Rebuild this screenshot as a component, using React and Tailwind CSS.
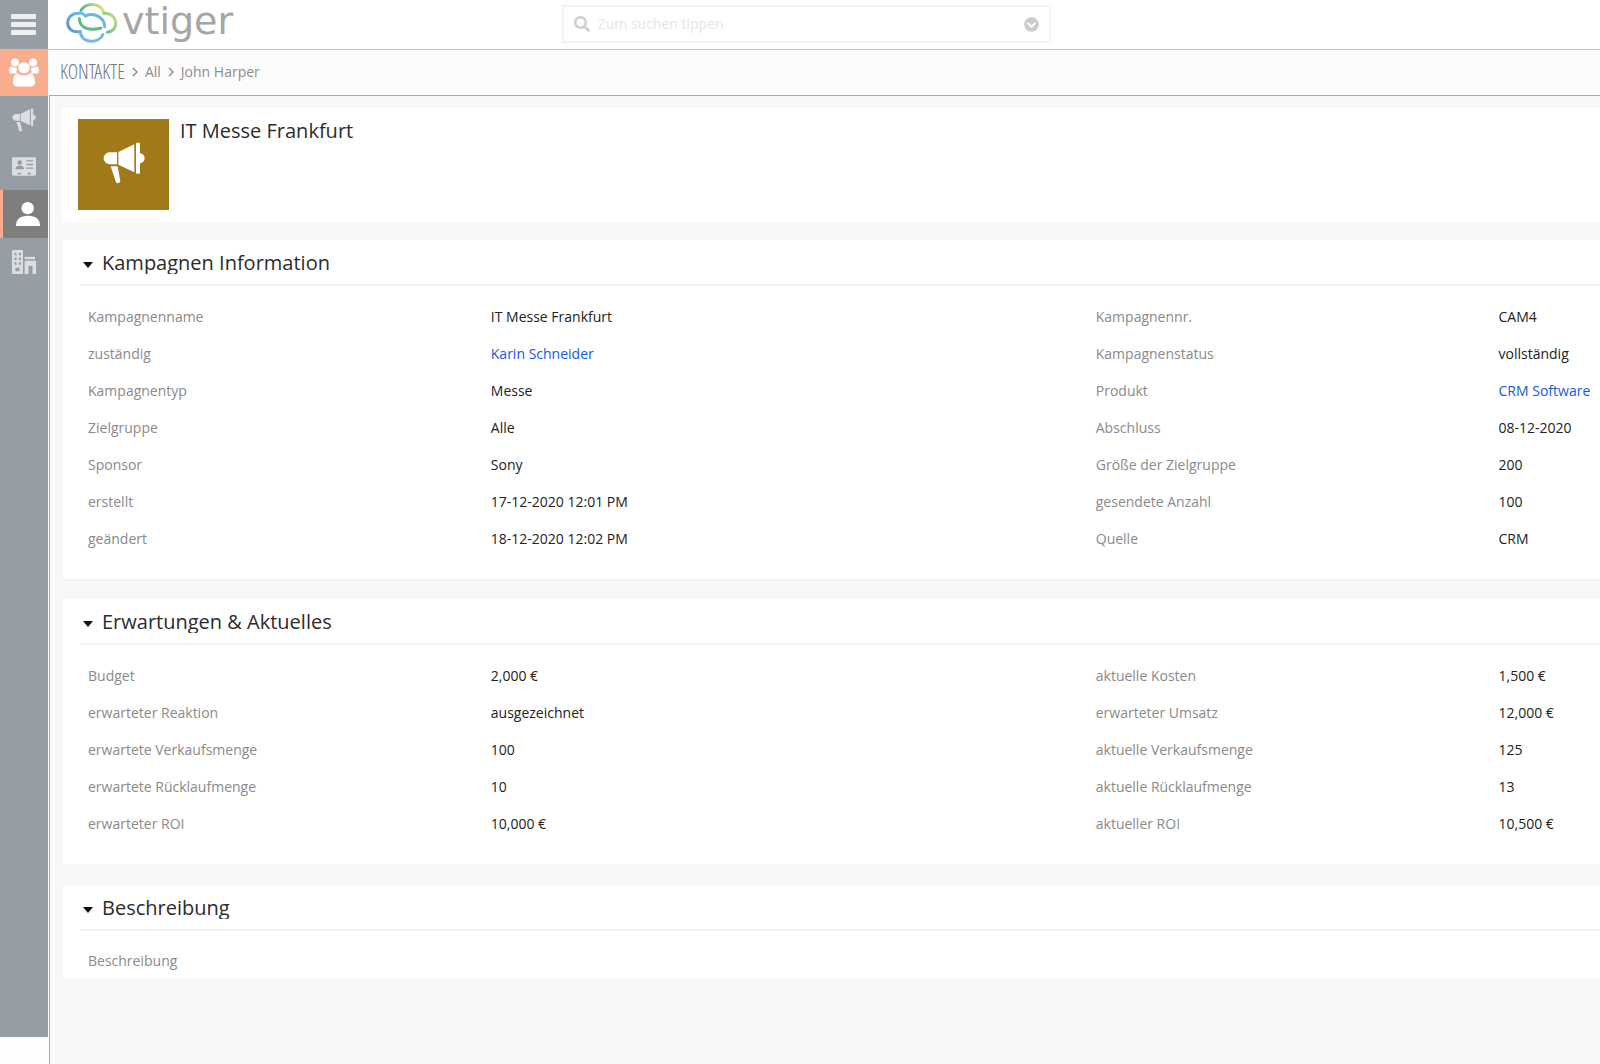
import { useState } from 'react'
import { FaChevronCircleDown, FaSearch } from 'react-icons/fa'

const infoRows = [
  ['Kampagnenname', 'IT Messe Frankfurt', 'Kampagnennr.', 'CAM4'],
  ['zuständig', { link: 'Karin Schneider' }, 'Kampagnenstatus', 'vollständig'],
  ['Kampagnentyp', 'Messe', 'Produkt', { link: 'CRM Software' }],
  ['Zielgruppe', 'Alle', 'Abschluss', '08-12-2020'],
  ['Sponsor', 'Sony', 'Größe der Zielgruppe', '200'],
  ['erstellt', '17-12-2020 12:01 PM', 'gesendete Anzahl', '100'],
  ['geändert', '18-12-2020 12:02 PM', 'Quelle', 'CRM'],
]

const expectationRows = [
  ['Budget', '2,000 €', 'aktuelle Kosten', '1,500 €'],
  ['erwarteter Reaktion', 'ausgezeichnet', 'erwarteter Umsatz', '12,000 €'],
  ['erwartete Verkaufsmenge', '100', 'aktuelle Verkaufsmenge', '125'],
  ['erwartete Rücklaufmenge', '10', 'aktuelle Rücklaufmenge', '13'],
  ['erwarteter ROI', '10,000 €', 'aktueller ROI', '10,500 €'],
]

function MenuIcon() {
  return (
    <svg viewBox="0 0 26 22" className="w-[26px] h-[22px]" fill="currentColor">
      <rect x="0" y="0" width="25" height="5" rx="1" />
      <rect x="0" y="8" width="25" height="5" rx="1" />
      <rect x="0" y="16" width="25" height="5" rx="1" />
    </svg>
  )
}

function GroupIcon() {
  return (
    <svg viewBox="0 0 90 86" className="w-[30px] h-[29px]" fill="currentColor">
      <circle cx="18" cy="13" r="12" />
      <circle cx="72" cy="13" r="12" />
      <path d="M8 25c-6 0-8 8-8 14 0 5 3 7 8 7h16c-2-6-2-12 1-17-4 0-13-1-17-4z" />
      <path d="M82 25c6 0 8 8 8 14 0 5-3 7-8 7H66c2-6 2-12-1-17 4 0 13-1 17-4z" />
      <circle cx="45" cy="29" r="17" />
      <path d="M28 46c-12 0-16 11-16 26 0 9 5 13 13 13h40c8 0 13-4 13-13 0-15-4-26-16-26-9 8-25 8-34 0z" />
    </svg>
  )
}

function MegaphoneIcon({ className }) {
  return (
    <svg viewBox="308 156 126 126" className={className} fill="currentColor">
      <path d="M350 187h-20c-12 0-20 8-20 18s8 18 20 18h20z" />
      <path d="M354 186l48-23v84l-48-23z" />
      <path d="M407 160q0-2 3-2h6q3 0 3 3v29c8 1 14 7 14 15s-6 14-14 15v28q0 3-3 3h-6q-3 0-3-3z" />
      <path d="M331 229h21l8 45q0 3-3 4l-6 2q-3 0-4-3z" />
    </svg>
  )
}

function ContactCardIcon() {
  return (
    <svg viewBox="0 0 72 56" className="w-6 h-[19px]" fill="currentColor">
      <path
        fillRule="evenodd"
        d="M4 0h64q4 0 4 4v48q0 4-4 4H4q-4 0-4-4V4q0-4 4-4zM23 9a7 7 0 1 0 0 14 7 7 0 0 0 0-14zM10 36h26c0-7-5-11-13-11s-13 4-13 11zM43 9v4h20V9zM43 20v4h20v-4zM43 31v4h20v-4zM17 47v5h9v-5zM47 47v5h9v-5z"
      />
    </svg>
  )
}

function PersonIcon() {
  return (
    <svg viewBox="0 0 70 70" className="w-6 h-6" fill="currentColor">
      <circle cx="34" cy="18" r="18" />
      <path d="M0 70c0-20 12-30 35-30s35 10 35 30z" />
    </svg>
  )
}

function BuildingIcon() {
  return (
    <svg viewBox="0 0 70 70" className="w-6 h-6" fill="currentColor">
      <path
        fillRule="evenodd"
        d="M2 0h30v70H0V2zM7 8v7h6V8zM20 8v7h6V8zM7 22v7h6v-7zM20 22v7h6v-7zM7 36v7h6v-7zM20 36v7h6v-7zM10 52v10h12V52z"
      />
      <path d="M37 20h30v7H37z" />
      <path d="M37 31h33v39H60V46H48v24H37z" />
    </svg>
  )
}

function Logo() {
  return (
    <a href="#" aria-label="vtiger" className="flex items-center gap-1 h-full">
      <svg viewBox="198 6 156 122" className="w-[52px] h-[41px]" fill="none" strokeWidth="9" strokeLinecap="round">
        <defs>
          <linearGradient id="lobeTop" x1="0" x2="1" y1="0" y2="0">
            <stop offset="0" stopColor="#4fb79b" />
            <stop offset="0.6" stopColor="#b9dc74" />
            <stop offset="1" stopColor="#d5e67e" />
          </linearGradient>
          <linearGradient id="lobeRight" x1="1" x2="0" y1="0" y2="1">
            <stop offset="0" stopColor="#c8e27c" />
            <stop offset="1" stopColor="#5dbb8a" />
          </linearGradient>
          <linearGradient id="lobeLeft" x1="0" x2="1" y1="1" y2="0">
            <stop offset="0" stopColor="#5f93cc" />
            <stop offset="1" stopColor="#6fbfe8" />
          </linearGradient>
        </defs>
        <path stroke="url(#lobeTop)" d="M243 31C258 6 301 5 312 39" />
        <path stroke="url(#lobeRight)" d="M312 39C356 38 359 93 322 96" />
        <path stroke="#5dbb8a" d="M238 55C239 84 268 93 303 84" />
        <path stroke="url(#lobeLeft)" d="M241 94C193 103 190 40 235 39C246 38 252 42 257 47" />
        <path stroke="#74b6e6" d="M241 96C245 131 298 131 309 103" />
        <path stroke="#69b7e6" d="M257 47C282 36 314 51 314 80" />
      </svg>
      <span className="font-['DejaVu_Sans'] text-[38px] leading-10 pb-1 text-[#a6a6a6]">vtiger</span>
    </a>
  )
}

function Sidebar() {
  const item = 'flex items-center justify-center w-full h-[47px] text-[#dcdfe1]'
  return (
    <nav className="w-12 shrink-0 mb-[27px] bg-[#969da4]">
      <button type="button" aria-label="Menü" className="flex items-center justify-center w-full h-[49px] text-[#eeeff0]">
        <MenuIcon />
      </button>
      <a href="#" aria-label="Kontakte" className="flex items-center justify-center w-full h-[47px] bg-[#f8ad8f] text-white">
        <GroupIcon />
      </a>
      <a href="#" aria-label="Kampagnen" className={item}>
        <MegaphoneIcon className="w-6 h-6" />
      </a>
      <a href="#" aria-label="Leads" className={item}>
        <ContactCardIcon />
      </a>
      <a
        href="#"
        aria-label="Personen"
        className="flex items-center justify-center w-full h-12 pl-1 border-l-3 border-[#f8ad8f] bg-[#7e7e7e] text-white"
      >
        <PersonIcon />
      </a>
      <a href="#" aria-label="Organisationen" className={item}>
        <BuildingIcon />
      </a>
    </nav>
  )
}

function Chevron() {
  return (
    <svg viewBox="0 0 6 10" className="w-[6px] h-[10px] mx-[7px]" fill="none" stroke="#8c8c8c" strokeWidth="1.5">
      <path d="M1 1l4 4-4 4" />
    </svg>
  )
}

function Value({ value }) {
  if (typeof value === 'string') return value
  return <a href="#" className="text-[#1558e0]">{value.link}</a>
}

function Block({ title, rows, className, children }) {
  const [open, setOpen] = useState(true)
  return (
    <section className={`ml-[13px] pl-[17px] bg-white ${className}`}>
      <h2 className="border-b-2 border-[#f2f2f2]">
        <button
          type="button"
          aria-expanded={open}
          onClick={() => setOpen(!open)}
          className="flex items-center gap-[9px] w-full h-11 pt-0.5 pl-[3px] text-left"
        >
          <svg viewBox="0 0 10 6" className="w-[10px] h-[6px] mt-1" fill="#111">
            <path d="M0 0h10L5 6z" />
          </svg>
          <span className="overflow-hidden text-xl leading-[22px] text-[#2c2c2c]">{title}</span>
        </button>
      </h2>
      {open && rows && (
        <table className="w-full mt-3 table-fixed text-left text-sm">
          <colgroup>
            <col className="w-[26.5%]" />
            <col className="w-[39.8%]" />
            <col className="w-[26.5%]" />
            <col />
          </colgroup>
          <tbody>
            {rows.map(([label, value, label2, value2]) => (
              <tr key={label} className="h-[37px] whitespace-nowrap">
                <th className="pl-2 font-normal text-[#8a8a8a]">{label}</th>
                <td className="pl-2"><Value value={value} /></td>
                <th className="pl-2 font-normal text-[#8a8a8a]">{label2}</th>
                <td className="pl-2"><Value value={value2} /></td>
              </tr>
            ))}
          </tbody>
        </table>
      )}
      {open && children}
    </section>
  )
}

export default function App() {
  const [query, setQuery] = useState('')

  return (
    <div className="flex min-h-screen overflow-x-hidden bg-[#fdfdfd] font-['Open_Sans',sans-serif] text-[#222]">
      <Sidebar />
      <div className="flex flex-col flex-1 min-w-0">
        <header className="flex h-[50px] shrink-0 pb-1 border-b border-[#f3b39d] bg-white">
          <div className="w-[33.1%] pl-[18px]">
            <Logo />
          </div>
          <form className="flex items-center gap-2 w-[31.5%] h-[38px] mt-[5px] px-[10px] border-2 border-[#f3f3f3]" role="search">
            <FaSearch className="w-4 h-4 shrink-0 text-[#cfcfcf]" />
            <input
              type="text"
              aria-label="Suche"
              value={query}
              onChange={e => setQuery(e.target.value)}
              placeholder="Zum suchen tippen"
              className="flex-1 min-w-0 text-sm outline-none placeholder:text-[#e6e6e6]"
            />
            <button type="button" aria-label="Erweiterte Suche">
              <FaChevronCircleDown className="w-[15px] h-[15px] text-[#cbcbcb]" />
            </button>
          </form>
        </header>
        <div className="flex items-center h-[45px] shrink-0 pl-3 pb-0.5 bg-[#fcfcfc] text-sm text-[#8c8c8c]">
          <a
            href="#"
            className="font-['Open_Sans_Condensed_Light','Open_Sans_Condensed','Liberation_Sans_Narrow',sans-serif] font-light text-xl text-[#6f7981]"
          >
            KONTAKTE
          </a>
          <Chevron />
          <a href="#">All</a>
          <Chevron />
          <span>John Harper</span>
        </div>
        <main className="flex-1 ml-px border-t border-l border-[#ababab] bg-[#f8f8f8]">
          <div className="flex gap-[11px] ml-3 mt-3 h-[114px] pl-4 pt-[11px] bg-white">
            <div className="flex items-center justify-center w-[91px] h-[91px] pb-1 bg-[#a07a18] text-white">
              <MegaphoneIcon className="w-[42px] h-[42px]" />
            </div>
            <h1 className="text-xl leading-6 text-[#2c2c2c]">IT Messe Frankfurt</h1>
          </div>
          <Block title="Kampagnen Information" rows={infoRows} className="mt-[18px] pb-[22px] border-b-2 border-[#f2f2f2]" />
          <Block title="Erwartungen & Aktuelles" rows={expectationRows} className="mt-[18px] pb-[22px]" />
          <Block title="Beschreibung" className="mt-[21px]">
            <p className="pl-2 pt-5 pb-2 text-sm text-[#8a8a8a]">Beschreibung</p>
          </Block>
        </main>
      </div>
    </div>
  )
}
